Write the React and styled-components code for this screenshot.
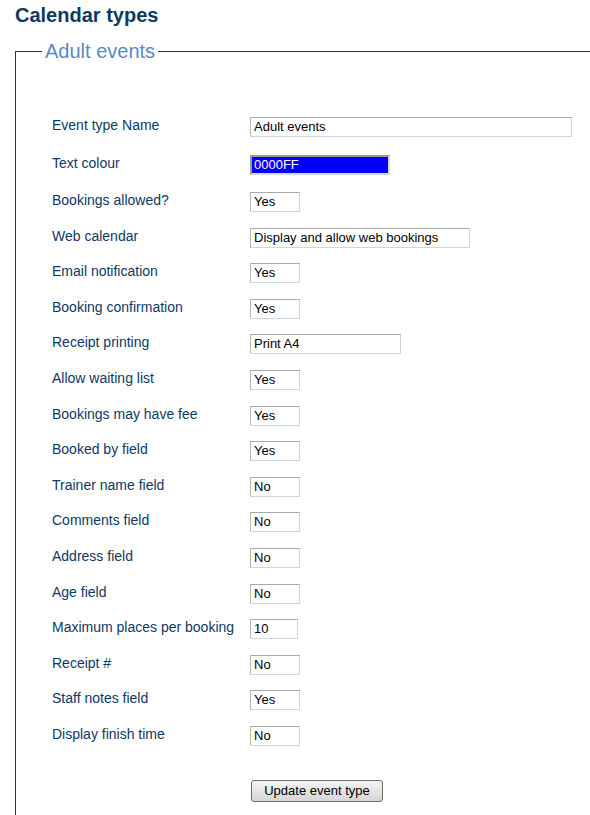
import React from "react";
import styled, { createGlobalStyle } from "styled-components";

const GlobalStyle = createGlobalStyle`
  html, body {
    margin: 0;
    padding: 0;
    background: #ffffff;
  }
  body {
    font-family: "Liberation Sans", Arial, sans-serif;
  }
`;

const Page = styled.div`
  box-sizing: border-box;
  width: 590px;
  height: 815px;
  padding: 0 0 0 15px;
  overflow: hidden;
`;

const Heading = styled.h1`
  margin: 4px 0 13px;
  font-size: 20px;
  line-height: 23px;
  font-weight: bold;
  color: #0e3a5e;
`;

const Fieldset = styled.fieldset`
  margin: 0;
  width: 620px;
  min-height: 820px;
  padding: 0;
  border: 1px solid #1b3a57;
  border-right: none;
  border-bottom: none;
`;

const Legend = styled.legend`
  margin-left: 26px;
  padding: 0 3px;
  font-size: 20px;
  line-height: 23px;
  color: #5a87c5;
`;

const Form = styled.div`
  margin-top: 54px;
  padding-left: 36px;
  display: flex;
  flex-direction: column;
`;

const Row = styled.div`
  display: grid;
  grid-template-columns: 198px auto;
  align-items: start;
  height: ${({ $h }) => $h}px;
`;

const Label = styled.div`
  font-size: 14px;
  line-height: 14px;
  color: #0d3963;
  padding-top: 1px;
`;

const Field = styled.div`
  box-sizing: border-box;
  width: ${({ $w }) => $w}px;
  height: 20px;
  padding: 0 3px;
  font-size: 13px;
  line-height: 18px;
  color: ${({ $bg }) => ($bg ? "#ffffff" : "#000000")};
  background: ${({ $bg }) => $bg || "#ffffff"};
  border: 1px solid #d0d4e0;
  border-top-color: #a8aaa8;
  border-left-color: #b8bab8;
  ${({ $bg }) =>
    $bg &&
    `border: 2px solid #9a9a9a; border-right-color: #d8d8d8; border-bottom-color: #d8d8d8; line-height: 16px; padding: 0 2px;`}
  white-space: nowrap;
  overflow: hidden;
`;

const ButtonRow = styled.div`
  margin-top: 18px;
  padding-left: 235px;
`;

const Button = styled.button`
  box-sizing: border-box;
  width: 132px;
  height: 22px;
  padding: 0;
  font-family: "Liberation Sans", Arial, sans-serif;
  font-size: 13px;
  color: #000000;
  border: 1px solid #6b6b6b;
  border-radius: 3px;
  background: linear-gradient(#f4f4f4, #d6d6d6);
`;

const fields = [
  { label: "Event type Name", value: "Adult events", w: 322, h: 38 },
  { label: "Text colour", value: "0000FF", w: 140, h: 37, bg: "#0000ff" },
  { label: "Bookings allowed?", value: "Yes", w: 50 },
  { label: "Web calendar", value: "Display and allow web bookings", w: 220 },
  { label: "Email notification", value: "Yes", w: 50 },
  { label: "Booking confirmation", value: "Yes", w: 50 },
  { label: "Receipt printing", value: "Print A4", w: 151 },
  { label: "Allow waiting list", value: "Yes", w: 50 },
  { label: "Bookings may have fee", value: "Yes", w: 50 },
  { label: "Booked by field", value: "Yes", w: 50 },
  { label: "Trainer name field", value: "No", w: 50 },
  { label: "Comments field", value: "No", w: 50 },
  { label: "Address field", value: "No", w: 50 },
  { label: "Age field", value: "No", w: 50 },
  { label: "Maximum places per booking", value: "10", w: 48 },
  { label: "Receipt #", value: "No", w: 50 },
  { label: "Staff notes field", value: "Yes", w: 50 },
  { label: "Display finish time", value: "No", w: 50 },
];

const App = () => {
  return (
    <Page>
      <GlobalStyle />
      <Heading>Calendar types</Heading>
      <Fieldset>
        <Legend>Adult events</Legend>
        <Form>
          {fields.map((f) => (
            <Row key={f.label} $h={f.h || 35.6}>
              <Label>{f.label}</Label>
              <Field $w={f.w} $bg={f.bg}>
                {f.value}
              </Field>
            </Row>
          ))}
        </Form>
        <ButtonRow>
          <Button>Update event type</Button>
        </ButtonRow>
      </Fieldset>
    </Page>
  );
};

export default App;
